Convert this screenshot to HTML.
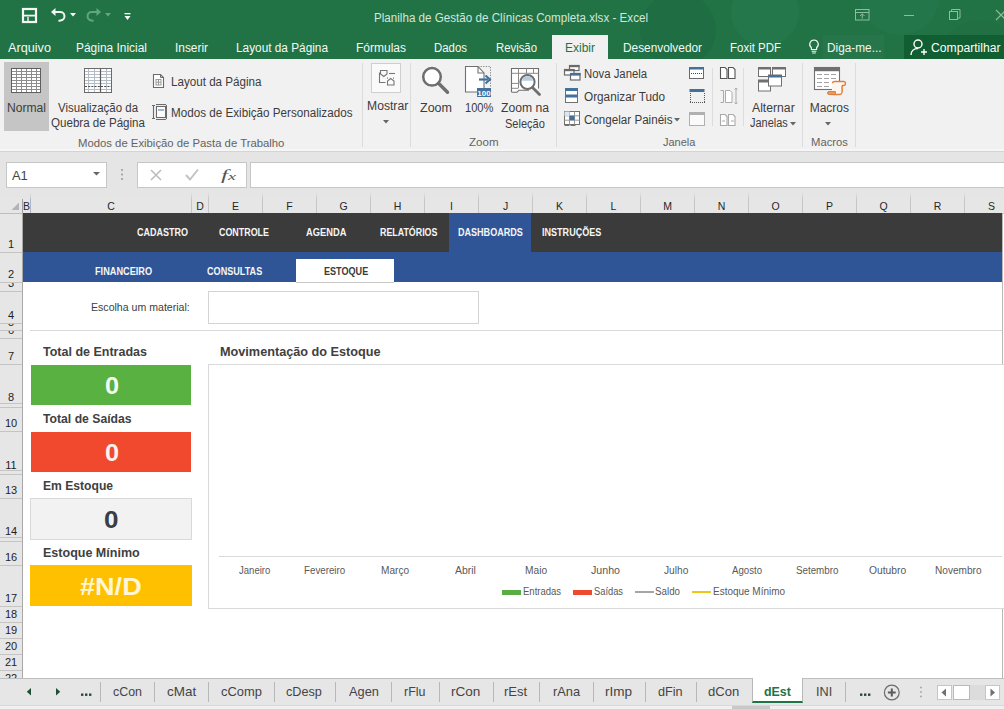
<!DOCTYPE html>
<html><head><meta charset="utf-8">
<style>
*{margin:0;padding:0;box-sizing:border-box}
html,body{width:1004px;height:709px;overflow:hidden;background:#fff;font-family:"Liberation Sans",sans-serif}
.a{position:absolute;white-space:nowrap}
.t{position:absolute;white-space:nowrap;transform-origin:0 0}
svg.a{overflow:visible}
</style></head><body>

<div class="a" style="left:0px;top:0px;width:1004px;height:59px;background:#217346"></div>
<svg class="a" style="left:560px;top:0px;overflow:hidden" width="444" height="59" viewBox="0 0 444 59"><circle cx="118" cy="30" r="38" fill="#1f6c42" opacity="0.8"/><circle cx="205" cy="12" r="34" fill="#26794c" opacity="0.6"/><circle cx="340" cy="-5" r="40" fill="#267a4c" opacity="0.5"/><circle cx="420" cy="60" r="40" fill="#1f6e43" opacity="0.6"/></svg>
<svg class="a" style="left:21px;top:7px;" width="17" height="17" viewBox="0 0 17 17"><rect x="2" y="2" width="13" height="13" fill="none" stroke="#f2f8f4" stroke-width="2.2"/><path d="M2 8.6h13" stroke="#f2f8f4" stroke-width="1.8"/><path d="M7 10v4.5" stroke="#f2f8f4" stroke-width="1.4"/></svg>
<svg class="a" style="left:50px;top:7px;" width="17" height="15" viewBox="0 0 17 15"><path d="M4 5h6a4.2 4.2 0 0 1 0.5 8.4L8.5 14" fill="none" stroke="#eef7f1" stroke-width="2"/><path d="M1 5L5.5 1V9z" fill="#eef7f1"/></svg>
<svg class="a" style="left:70px;top:13px;" width="7" height="4" viewBox="0 0 7 4"><path d="M0 0h6l-3 3.5z" fill="#fff"/></svg>
<svg class="a" style="left:85px;top:7px;" width="17" height="15" viewBox="0 0 17 15"><path d="M13 5H7a4.2 4.2 0 0 0-0.5 8.4L8.5 14" fill="none" stroke="#62a67e" stroke-width="2"/><path d="M16 5L11.5 1V9z" fill="#62a67e"/></svg>
<svg class="a" style="left:105px;top:13px;" width="7" height="4" viewBox="0 0 7 4"><path d="M0 0h6l-3 3.5z" fill="#6aa583"/></svg>
<svg class="a" style="left:124px;top:12px;" width="8" height="9" viewBox="0 0 8 9"><rect x="0.5" y="1" width="6" height="1.3" fill="#fff"/><path d="M0.5 4h6l-3 4z" fill="#fff"/></svg>
<div id="t0" class="t" style="left:374px;top:12.24px;font-size:12px;line-height:12px;color:#d3e6da;font-weight:400;font-family:'Liberation Sans', sans-serif;transform:scaleX(0.9689);">Planilha de Gestão de Clínicas Completa.xlsx - Excel</div>
<svg class="a" style="left:855px;top:9px;" width="15" height="12" viewBox="0 0 15 12"><rect x="0.5" y="0.5" width="13.5" height="10.5" fill="none" stroke="#8fbba0" stroke-width="1"/><path d="M0.5 3.5h13.5M7.25 9.5V5M5 7l2.25-2.25L9.5 7" fill="none" stroke="#8fbba0" stroke-width="1"/></svg>
<div class="a" style="left:904px;top:15px;width:10px;height:1px;background:#8fbba0"></div>
<svg class="a" style="left:949px;top:9px;" width="12" height="12" viewBox="0 0 12 12"><rect x="0.5" y="2.5" width="8" height="8" fill="none" stroke="#8fbba0"/><path d="M2.5 2.5V0.5h8.5v8.5H8.5" fill="none" stroke="#8fbba0"/></svg>
<svg class="a" style="left:995px;top:9px;" width="12" height="12" viewBox="0 0 12 12"><path d="M1 1l10 10M11 1L1 11" stroke="#8fbba0" stroke-width="1.1"/></svg>
<div id="t1" class="t" style="left:8px;top:41.64px;font-size:12px;line-height:12px;color:#f4f9f6;font-weight:400;font-family:'Liberation Sans', sans-serif;transform:scaleX(1.0568);">Arquivo</div>
<div id="t2" class="t" style="left:76px;top:41.64px;font-size:12px;line-height:12px;color:#f4f9f6;font-weight:400;font-family:'Liberation Sans', sans-serif;transform:scaleX(0.9945);">Página Inicial</div>
<div id="t3" class="t" style="left:175px;top:41.64px;font-size:12px;line-height:12px;color:#f4f9f6;font-weight:400;font-family:'Liberation Sans', sans-serif;transform:scaleX(0.9897);">Inserir</div>
<div id="t4" class="t" style="left:236px;top:41.64px;font-size:12px;line-height:12px;color:#f4f9f6;font-weight:400;font-family:'Liberation Sans', sans-serif;transform:scaleX(0.9848);">Layout da Página</div>
<div id="t5" class="t" style="left:356px;top:41.64px;font-size:12px;line-height:12px;color:#f4f9f6;font-weight:400;font-family:'Liberation Sans', sans-serif;">Fórmulas</div>
<div id="t6" class="t" style="left:434px;top:41.64px;font-size:12px;line-height:12px;color:#f4f9f6;font-weight:400;font-family:'Liberation Sans', sans-serif;transform:scaleX(0.9514);">Dados</div>
<div id="t7" class="t" style="left:496px;top:41.64px;font-size:12px;line-height:12px;color:#f4f9f6;font-weight:400;font-family:'Liberation Sans', sans-serif;transform:scaleX(0.9456);">Revisão</div>
<div id="t8" class="t" style="left:623px;top:41.64px;font-size:12px;line-height:12px;color:#f4f9f6;font-weight:400;font-family:'Liberation Sans', sans-serif;transform:scaleX(0.9869);">Desenvolvedor</div>
<div id="t9" class="t" style="left:730px;top:41.64px;font-size:12px;line-height:12px;color:#f4f9f6;font-weight:400;font-family:'Liberation Sans', sans-serif;transform:scaleX(0.9561);">Foxit PDF</div>
<div class="a" style="left:552px;top:35px;width:56px;height:24px;background:#f1f1f1"></div>
<div id="t10" class="t" style="left:565px;top:41.64px;font-size:12px;line-height:12px;color:#217346;font-weight:400;font-family:'Liberation Sans', sans-serif;">Exibir</div>
<div class="a" style="left:823px;top:35px;width:61px;height:24px;background:#27754a"></div>
<svg class="a" style="left:808px;top:39px;" width="12" height="15" viewBox="0 0 12 15"><path d="M6 1a4.3 4.3 0 0 0-2.6 7.7V10.5h5.2V8.7A4.3 4.3 0 0 0 6 1z" fill="none" stroke="#f0f7f2" stroke-width="1.2"/><path d="M3.6 12.2h4.8M4.2 14h3.6" stroke="#f0f7f2" stroke-width="1.1"/></svg>
<div id="t11" class="t" style="left:826.5px;top:41.64px;font-size:12px;line-height:12px;color:#f0f7f2;font-weight:400;font-family:'Liberation Sans', sans-serif;transform:scaleX(0.9845);">Diga-me...</div>
<div class="a" style="left:904px;top:35px;width:100px;height:24px;background:#105e31"></div>
<svg class="a" style="left:910px;top:39px;" width="18" height="17" viewBox="0 0 18 17"><circle cx="8" cy="5" r="4" fill="none" stroke="#fff" stroke-width="1.4"/><path d="M1 16c0-4 3-6.5 7-6.5" fill="none" stroke="#fff" stroke-width="1.4"/><path d="M11 13h6M14 10v6" stroke="#fff" stroke-width="1.4"/></svg>
<div id="t12" class="t" style="left:930.5px;top:41.64px;font-size:12px;line-height:12px;color:#ffffff;font-weight:400;font-family:'Liberation Sans', sans-serif;transform:scaleX(1.0116);">Compartilhar</div>
<div class="a" style="left:0px;top:59px;width:1004px;height:93px;background:#f1f1f1;border-bottom:1px solid #d4d4d4"></div>
<div class="a" style="left:0px;top:149px;width:1004px;height:2px;background:#f6f6f6"></div>
<div class="a" style="left:4px;top:62px;width:45px;height:69px;background:#c5c5c5"></div>
<svg class="a" style="left:11px;top:68px;" width="30" height="25" viewBox="0 0 30 25"><rect x="0" y="0" width="30" height="25" fill="#8c8c8c"/><rect x="1" y="1" width="4" height="2" fill="#fff"/><rect x="6" y="1" width="4" height="2" fill="#fff"/><rect x="11" y="1" width="4" height="2" fill="#fff"/><rect x="16" y="1" width="4" height="2" fill="#fff"/><rect x="21" y="1" width="4" height="2" fill="#fff"/><rect x="26" y="1" width="3" height="2" fill="#fff"/><rect x="1" y="4" width="4" height="2" fill="#fff"/><rect x="6" y="4" width="4" height="2" fill="#fff"/><rect x="11" y="4" width="4" height="2" fill="#fff"/><rect x="16" y="4" width="4" height="2" fill="#fff"/><rect x="21" y="4" width="4" height="2" fill="#fff"/><rect x="26" y="4" width="3" height="2" fill="#fff"/><rect x="1" y="7" width="4" height="2" fill="#fff"/><rect x="6" y="7" width="4" height="2" fill="#fff"/><rect x="11" y="7" width="4" height="2" fill="#fff"/><rect x="16" y="7" width="4" height="2" fill="#fff"/><rect x="21" y="7" width="4" height="2" fill="#fff"/><rect x="26" y="7" width="3" height="2" fill="#fff"/><rect x="1" y="10" width="4" height="2" fill="#fff"/><rect x="6" y="10" width="4" height="2" fill="#fff"/><rect x="11" y="10" width="4" height="2" fill="#fff"/><rect x="16" y="10" width="4" height="2" fill="#fff"/><rect x="21" y="10" width="4" height="2" fill="#fff"/><rect x="26" y="10" width="3" height="2" fill="#fff"/><rect x="1" y="13" width="4" height="2" fill="#fff"/><rect x="6" y="13" width="4" height="2" fill="#fff"/><rect x="11" y="13" width="4" height="2" fill="#fff"/><rect x="16" y="13" width="4" height="2" fill="#fff"/><rect x="21" y="13" width="4" height="2" fill="#fff"/><rect x="26" y="13" width="3" height="2" fill="#fff"/><rect x="1" y="16" width="4" height="2" fill="#fff"/><rect x="6" y="16" width="4" height="2" fill="#fff"/><rect x="11" y="16" width="4" height="2" fill="#fff"/><rect x="16" y="16" width="4" height="2" fill="#fff"/><rect x="21" y="16" width="4" height="2" fill="#fff"/><rect x="26" y="16" width="3" height="2" fill="#fff"/><rect x="1" y="19" width="4" height="2" fill="#fff"/><rect x="6" y="19" width="4" height="2" fill="#fff"/><rect x="11" y="19" width="4" height="2" fill="#fff"/><rect x="16" y="19" width="4" height="2" fill="#fff"/><rect x="21" y="19" width="4" height="2" fill="#fff"/><rect x="26" y="19" width="3" height="2" fill="#fff"/><rect x="1" y="22" width="4" height="2" fill="#fff"/><rect x="6" y="22" width="4" height="2" fill="#fff"/><rect x="11" y="22" width="4" height="2" fill="#fff"/><rect x="16" y="22" width="4" height="2" fill="#fff"/><rect x="21" y="22" width="4" height="2" fill="#fff"/><rect x="26" y="22" width="3" height="2" fill="#fff"/><rect x="0.5" y="0.5" width="29" height="24" fill="none" stroke="#5e5e5e"/></svg>
<svg class="a" style="left:84px;top:68px;" width="28" height="25" viewBox="0 0 28 25"><rect x="0" y="0" width="28" height="25" fill="#fbfdff"/><path d="M4.5 1v23M10.5 1v23M22.5 1v23M1 3.5h26M1 6.5h26M1 9.5h26M1 12.5h26M1 15.5h26M1 21.5h26" stroke="#b4bcc6" stroke-width="1"/><path d="M16.5 1v23" stroke="#5a5a5a" stroke-width="1.2"/><path d="M1 18.5h26" stroke="#4a4a4a" stroke-width="1.2" stroke-dasharray="2 1.2"/><rect x="0.5" y="0.5" width="27" height="24" fill="none" stroke="#6a6a6a"/></svg>
<div id="t13" class="t" style="left:7px;top:101.84px;font-size:12px;line-height:12px;color:#3c3c3c;font-weight:400;font-family:'Liberation Sans', sans-serif;transform:scaleX(1.0085);">Normal</div>
<div id="t14" class="t" style="left:58px;top:101.84px;font-size:12px;line-height:12px;color:#3c3c3c;font-weight:400;font-family:'Liberation Sans', sans-serif;transform:scaleX(0.9542);">Visualização da</div>
<div id="t15" class="t" style="left:51px;top:117.34px;font-size:12px;line-height:12px;color:#3c3c3c;font-weight:400;font-family:'Liberation Sans', sans-serif;transform:scaleX(0.9650);">Quebra de Página</div>
<svg class="a" style="left:152px;top:73px;" width="13" height="16" viewBox="0 0 13 16"><path d="M1.5 1.5h7l3 3v10h-10z" fill="#fff" stroke="#6b6b6b" stroke-width="1.1"/><path d="M8.5 1.5v3h3" fill="none" stroke="#6b6b6b"/><rect x="4" y="6.5" width="5" height="5.5" fill="none" stroke="#9a9a9a"/><path d="M6.5 6.5v5.5M4 9.2h5" stroke="#9a9a9a"/></svg>
<div id="t16" class="t" style="left:170.5px;top:75.84px;font-size:12px;line-height:12px;color:#3c3c3c;font-weight:400;font-family:'Liberation Sans', sans-serif;transform:scaleX(0.9687);">Layout da Página</div>
<svg class="a" style="left:150px;top:103px;" width="18" height="18" viewBox="0 0 18 18"><path d="M2 2.5h3M2 15.5h3M3.5 2.5v13" stroke="#6b6b6b" stroke-width="1.1"/><rect x="6.5" y="3.5" width="9" height="11" fill="#fff" stroke="#6b6b6b" stroke-width="1.1"/><path d="M6 1.5h10M6 16.5h10M16.5 2v14" stroke="#6b6b6b" stroke-width="1"/><rect x="8" y="6" width="6" height="2" fill="#9fb7cf"/></svg>
<div id="t17" class="t" style="left:170.5px;top:106.84px;font-size:12px;line-height:12px;color:#3c3c3c;font-weight:400;font-family:'Liberation Sans', sans-serif;transform:scaleX(0.9717);">Modos de Exibição Personalizados</div>
<div id="t18" class="t" style="left:77.6px;top:137.69px;font-size:11px;line-height:11px;color:#636363;font-weight:400;font-family:'Liberation Sans', sans-serif;transform:scaleX(1.0290);">Modos de Exibição de Pasta de Trabalho</div>
<div class="a" style="left:362px;top:63px;width:1px;height:84px;background:#dcdcdc"></div>
<div class="a" style="left:371px;top:63px;width:30px;height:30px;background:#fafafa;border:1px solid #cfcfcf"></div>
<svg class="a" style="left:378px;top:69px;" width="20" height="18" viewBox="0 0 20 18"><path d="M1.5 3.5v10h6" fill="none" stroke="#777" stroke-width="1.1"/><path d="M2.5 1.5h6.5v3.5l-3.2 2.5-3.3-2.5z" fill="none" stroke="#777" stroke-width="1.1"/><path d="M11 4.5h6" stroke="#777" stroke-width="1.1"/><path d="M9.5 8.5v1.2M15.5 8.5v1.2" stroke="#777"/><path d="M9.5 16v-4l3.2-2.5 3.3 2.5v4z" fill="none" stroke="#777" stroke-width="1.1"/></svg>
<div id="t19" class="t" style="left:366.6px;top:100.04px;font-size:12px;line-height:12px;color:#3c3c3c;font-weight:400;font-family:'Liberation Sans', sans-serif;transform:scaleX(1.0130);">Mostrar</div>
<svg class="a" style="left:383px;top:120px;" width="7" height="4" viewBox="0 0 7 4"><path d="M0 0h6l-3 3.5z" fill="#666"/></svg>
<div class="a" style="left:410px;top:63px;width:1px;height:84px;background:#dcdcdc"></div>
<svg class="a" style="left:420px;top:65px;" width="31" height="31" viewBox="0 0 31 31"><circle cx="12" cy="11.8" r="8.8" fill="#fff" stroke="#6e6e6e" stroke-width="2.5"/><path d="M18.5 18.3l9 9" stroke="#6e6e6e" stroke-width="3.4" stroke-linecap="round"/></svg>
<div id="t20" class="t" style="left:420px;top:101.64px;font-size:12px;line-height:12px;color:#3c3c3c;font-weight:400;font-family:'Liberation Sans', sans-serif;transform:scaleX(1.0428);">Zoom</div>
<svg class="a" style="left:464px;top:65px;" width="29" height="33" viewBox="0 0 29 33"><path d="M1.5 1.5h12.5l6 6.5v19h-18.5z" fill="#fff" stroke="#707070" stroke-width="1.1"/><path d="M14 1.5V8h6" fill="none" stroke="#707070" stroke-width="1.1"/><path d="M14 1.5h12.5v20" fill="none" stroke="#888" stroke-dasharray="1.3 1.3"/><path d="M15 14.5h9" stroke="#3f6fa0" stroke-width="2.2"/><path d="M21.5 10.5l4.5 4-4.5 4" fill="none" stroke="#3f6fa0" stroke-width="2"/><rect x="13" y="23" width="14" height="9" fill="#41719c"/><text x="20" y="30.6" font-size="8" font-family="Liberation Sans" font-weight="bold" fill="#fff" text-anchor="middle">100</text></svg>
<div id="t21" class="t" style="left:464.6px;top:101.64px;font-size:12px;line-height:12px;color:#3c3c3c;font-weight:400;font-family:'Liberation Sans', sans-serif;transform:scaleX(0.9250);">100%</div>
<svg class="a" style="left:510px;top:67px;" width="33" height="31" viewBox="0 0 33 31"><path d="M1.5 25V1.5h27v20" fill="#fff" stroke="#6e6e6e" stroke-width="1.1"/><path d="M1.5 25.2h5.5l2-2h10" fill="none" stroke="#6e6e6e" stroke-width="1.1"/><path d="M1.5 6.3h27M8.5 1.5v4.8M16.5 1.5v4.8M23.5 1.5v4.8M1.5 16.4h6.5M1.5 21.3h6.5M8.5 6.3v15" stroke="#8a8a8a" stroke-width="1"/><circle cx="17.5" cy="15" r="7.1" fill="#fff" stroke="#6e6e6e" stroke-width="2"/><path d="M12 13.8a5.6 5.6 0 0 1 11 0z" fill="#b6cde0"/><path d="M22.5 20.5l7 7" stroke="#6e6e6e" stroke-width="2.8" stroke-linecap="round"/></svg>
<div id="t22" class="t" style="left:501px;top:101.64px;font-size:12px;line-height:12px;color:#3c3c3c;font-weight:400;font-family:'Liberation Sans', sans-serif;transform:scaleX(1.0135);">Zoom na</div>
<div id="t23" class="t" style="left:505.4px;top:117.54px;font-size:12px;line-height:12px;color:#3c3c3c;font-weight:400;font-family:'Liberation Sans', sans-serif;transform:scaleX(0.9199);">Seleção</div>
<div id="t24" class="t" style="left:469px;top:137.29px;font-size:11px;line-height:11px;color:#636363;font-weight:400;font-family:'Liberation Sans', sans-serif;transform:scaleX(1.0489);">Zoom</div>
<div class="a" style="left:556px;top:63px;width:1px;height:84px;background:#dcdcdc"></div>
<svg class="a" style="left:563px;top:64px;" width="18" height="17" viewBox="0 0 18 17"><rect x="6.5" y="1.5" width="9.5" height="5" fill="#fff" stroke="#6a6a6a" stroke-width="1.2"/><rect x="6" y="1" width="10.5" height="2.2" fill="#6a6a6a"/><rect x="1.5" y="5.5" width="9.5" height="5.5" fill="#fff" stroke="#6a6a6a" stroke-width="1.2"/><rect x="1" y="5" width="10.5" height="2.2" fill="#6a6a6a"/><rect x="7.5" y="9.5" width="9.5" height="6.5" fill="#fff" stroke="#6a6a6a" stroke-width="1.2"/><rect x="7" y="9" width="10.5" height="2.6" fill="#41719c"/></svg>
<div id="t25" class="t" style="left:583.5px;top:67.84px;font-size:12px;line-height:12px;color:#3c3c3c;font-weight:400;font-family:'Liberation Sans', sans-serif;transform:scaleX(0.9458);">Nova Janela</div>
<svg class="a" style="left:564px;top:87px;" width="15" height="17" viewBox="0 0 15 17"><rect x="1.5" y="1.5" width="12" height="14" fill="#fff" stroke="#707070"/><rect x="1.5" y="1" width="12" height="3" fill="#41719c"/><rect x="1.5" y="7.5" width="12" height="3" fill="#41719c"/></svg>
<div id="t26" class="t" style="left:583.5px;top:90.64px;font-size:12px;line-height:12px;color:#3c3c3c;font-weight:400;font-family:'Liberation Sans', sans-serif;transform:scaleX(0.9804);">Organizar Tudo</div>
<svg class="a" style="left:563px;top:110px;" width="18" height="17" viewBox="0 0 18 17"><rect x="1.5" y="1.5" width="15" height="13" fill="#fff" stroke="#707070"/><path d="M1.5 5.8h15M1.5 10.2h15M6.5 1.5v13M11.5 1.5v13" stroke="#9a9a9a"/><rect x="6.5" y="5.8" width="5" height="4.4" fill="#41719c"/><rect x="1.5" y="1.5" width="5" height="4.3" fill="#dce6f0"/><path d="M1.5 15.5h5M7.5 15.5h5" stroke="#707070"/></svg>
<div id="t27" class="t" style="left:583.5px;top:113.54px;font-size:12px;line-height:12px;color:#3c3c3c;font-weight:400;font-family:'Liberation Sans', sans-serif;transform:scaleX(0.9684);">Congelar Painéis</div>
<svg class="a" style="left:674px;top:118px;" width="7" height="4" viewBox="0 0 7 4"><path d="M0 0h6l-3 3.5z" fill="#666"/></svg>
<svg class="a" style="left:688px;top:66px;" width="17" height="14" viewBox="0 0 17 14"><rect x="1.5" y="1.5" width="14" height="11" fill="#fff" stroke="#6a6a6a"/><rect x="1" y="1" width="15" height="2.5" fill="#41719c"/><rect x="3" y="7" width="1" height="1" fill="#444"/><rect x="5" y="7" width="1" height="1" fill="#444"/><rect x="7" y="7" width="1" height="1" fill="#444"/><rect x="9" y="7" width="1" height="1" fill="#444"/><rect x="11" y="7" width="1" height="1" fill="#444"/><rect x="13" y="7" width="1" height="1" fill="#444"/></svg>
<svg class="a" style="left:688px;top:88px;" width="18" height="16" viewBox="0 0 18 16"><rect x="1.5" y="1" width="15" height="3" fill="#41719c"/><rect x="2" y="14" width="1" height="1" fill="#555"/><rect x="4" y="14" width="1" height="1" fill="#555"/><rect x="6" y="14" width="1" height="1" fill="#555"/><rect x="8" y="14" width="1" height="1" fill="#555"/><rect x="10" y="14" width="1" height="1" fill="#555"/><rect x="12" y="14" width="1" height="1" fill="#555"/><rect x="14" y="14" width="1" height="1" fill="#555"/><rect x="16" y="14" width="1" height="1" fill="#555"/><rect x="2" y="5" width="1" height="1" fill="#555"/><rect x="16" y="5" width="1" height="1" fill="#555"/><rect x="2" y="7" width="1" height="1" fill="#555"/><rect x="16" y="7" width="1" height="1" fill="#555"/><rect x="2" y="9" width="1" height="1" fill="#555"/><rect x="16" y="9" width="1" height="1" fill="#555"/><rect x="2" y="11" width="1" height="1" fill="#555"/><rect x="16" y="11" width="1" height="1" fill="#555"/><rect x="2" y="13" width="1" height="1" fill="#555"/><rect x="16" y="13" width="1" height="1" fill="#555"/></svg>
<svg class="a" style="left:688px;top:111px;" width="17" height="15" viewBox="0 0 17 15"><rect x="1.5" y="1.5" width="15" height="13" fill="#fafafa" stroke="#b0b0b0"/><rect x="1.5" y="1.5" width="15" height="2.5" fill="#b0b0b0"/></svg>
<div class="a" style="left:712px;top:68px;width:1px;height:58px;background:#dcdcdc"></div>
<svg class="a" style="left:719px;top:66px;" width="18" height="14" viewBox="0 0 18 14"><path d="M1.5 1.5h4.5l2 2v9h-6.5z" fill="#fff" stroke="#555" stroke-width="1.1"/><path d="M9.5 1.5h4.5l2 2v9h-6.5z" fill="#fff" stroke="#555" stroke-width="1.1"/></svg>
<svg class="a" style="left:719px;top:87px;" width="19" height="18" viewBox="0 0 19 18"><path d="M1.5 3.5h3v12h-3" fill="none" stroke="#aaa"/><path d="M6.5 3.5h4.5l2 2v10h-6.5z" fill="#fff" stroke="#aaa"/><path d="M17 1v16M15.5 2.5l1.5-1.5 1.5 1.5M15.5 15.5l1.5 1.5 1.5-1.5" fill="none" stroke="#aaa"/></svg>
<svg class="a" style="left:719px;top:113px;" width="18" height="13" viewBox="0 0 18 13"><path d="M1.5 1.5h4.5l2 2v9h-6.5z" fill="#fff" stroke="#aaa" stroke-width="1.1"/><path d="M9.5 1.5h4.5l2 2v9h-6.5z" fill="#fff" stroke="#aaa" stroke-width="1.1"/><path d="M3 8h3M12 8h3" stroke="#aaa"/></svg>
<div class="a" style="left:743px;top:68px;width:1px;height:58px;background:#dcdcdc"></div>
<svg class="a" style="left:757px;top:66px;" width="31" height="27" viewBox="0 0 31 27"><rect x="1.5" y="1.5" width="12" height="9" fill="#fff" stroke="#707070"/><rect x="1.5" y="1" width="12" height="2.5" fill="#707070"/><rect x="15.5" y="1.5" width="13" height="9" fill="#fff" stroke="#707070"/><rect x="15.5" y="1" width="13" height="2.5" fill="#707070"/><rect x="1.5" y="14" width="12" height="11" fill="#fff" stroke="#707070"/><rect x="1.5" y="14" width="12" height="2.5" fill="#707070"/><rect x="11.5" y="9" width="13" height="11" fill="#fff" stroke="#707070"/><rect x="11.5" y="9" width="13" height="2.5" fill="#41719c"/></svg>
<div id="t28" class="t" style="left:752.3px;top:101.54px;font-size:12px;line-height:12px;color:#3c3c3c;font-weight:400;font-family:'Liberation Sans', sans-serif;transform:scaleX(1.0159);">Alternar</div>
<div id="t29" class="t" style="left:750px;top:117.34px;font-size:12px;line-height:12px;color:#3c3c3c;font-weight:400;font-family:'Liberation Sans', sans-serif;transform:scaleX(0.9112);">Janelas</div>
<svg class="a" style="left:790px;top:122px;" width="7" height="4" viewBox="0 0 7 4"><path d="M0 0h6l-3 3.5z" fill="#666"/></svg>
<div id="t30" class="t" style="left:663px;top:137.29px;font-size:11px;line-height:11px;color:#636363;font-weight:400;font-family:'Liberation Sans', sans-serif;">Janela</div>
<div class="a" style="left:802px;top:63px;width:1px;height:84px;background:#dcdcdc"></div>
<svg class="a" style="left:813px;top:66px;" width="34" height="30" viewBox="0 0 34 30"><rect x="1.5" y="1.5" width="25" height="22" fill="#fff" stroke="#707070" stroke-width="1.1"/><rect x="1" y="1" width="26" height="4.2" fill="#707070"/><path d="M4 8.5h5M11 8.5h5M18 8.5h5M4 12.5h5M11 12.5h5M18 12.5h5M4 16.5h5M11 16.5h5M4 20.5h5M11 20.5h5" stroke="#a3a3a3" stroke-width="1"/><path d="M19.5 17.5a2 2 0 0 1 2-2h9a2 2 0 0 1 0 4h-1.5v6.5a2.5 2.5 0 0 1-2.5 2.5h-8" fill="#fdf6ef" stroke="#e0803c" stroke-width="1.3"/><rect x="19.5" y="17" width="9.5" height="9" fill="#fdf6ef"/><path d="M29 19.5v6.5" stroke="#e0803c" stroke-width="1.3"/><path d="M16 25.5h6.5v3h-6.5a1.5 1.5 0 0 1 0-3z" fill="#e49a62" stroke="#e0803c" stroke-width="1"/></svg>
<div id="t31" class="t" style="left:809.7px;top:101.54px;font-size:12px;line-height:12px;color:#3c3c3c;font-weight:400;font-family:'Liberation Sans', sans-serif;">Macros</div>
<svg class="a" style="left:825px;top:122px;" width="7" height="4" viewBox="0 0 7 4"><path d="M0 0h6l-3 3.5z" fill="#666"/></svg>
<div id="t32" class="t" style="left:810.8px;top:137.29px;font-size:11px;line-height:11px;color:#636363;font-weight:400;font-family:'Liberation Sans', sans-serif;transform:scaleX(1.0232);">Macros</div>
<div class="a" style="left:855px;top:63px;width:1px;height:84px;background:#dcdcdc"></div>
<div class="a" style="left:0px;top:152px;width:1004px;height:46px;background:#e5e5e5"></div>
<div class="a" style="left:6px;top:162px;width:101px;height:26px;background:#fff;border:1px solid #c6c6c6"></div>
<div id="t33" class="t" style="left:12.4px;top:169.00px;font-size:13px;line-height:13px;color:#444;font-weight:400;font-family:'Liberation Sans', sans-serif;transform:scaleX(0.9933);">A1</div>
<svg class="a" style="left:93px;top:172px;" width="8" height="5" viewBox="0 0 8 5"><path d="M0 0h7l-3.5 3.5z" fill="#666"/></svg>
<svg class="a" style="left:120px;top:168px;" width="4" height="14" viewBox="0 0 4 14"><circle cx="2" cy="2" r="1" fill="#999"/><circle cx="2" cy="6.5" r="1" fill="#999"/><circle cx="2" cy="11" r="1" fill="#999"/></svg>
<div class="a" style="left:137px;top:162px;width:110px;height:26px;background:#fff;border:1px solid #c6c6c6"></div>
<svg class="a" style="left:150px;top:169px;" width="12" height="12" viewBox="0 0 12 12"><path d="M1 1l10 10M11 1L1 11" stroke="#bdbdbd" stroke-width="1.6"/></svg>
<svg class="a" style="left:185px;top:168px;" width="14" height="13" viewBox="0 0 14 13"><path d="M1 7l4 4.5L13 1.5" fill="none" stroke="#c3c3c3" stroke-width="2"/></svg>
<div id="t34" class="t" style="left:221px;top:169.15px;font-size:14px;line-height:14px;color:#555;font-weight:400;font-family:'Liberation Serif', serif;transform:scaleX(1.7978);"><i>f</i><span style="font-size:10px"><i>x</i></span></div>
<div class="a" style="left:250px;top:162px;width:760px;height:26px;background:#fff;border:1px solid #c6c6c6"></div>
<div class="a" style="left:0px;top:198px;width:1004px;height:15px;background:#e6e6e6"></div>
<div class="a" style="left:0px;top:213px;width:1004px;height:1px;background:#bdbdbd"></div>
<svg class="a" style="left:10px;top:201px;" width="10" height="10" viewBox="0 0 10 10"><path d="M9 1.5V9H1.5z" fill="#b4b4b4"/></svg>
<div class="a" style="left:23px;top:200.81px;width:7px;font-size:10.5px;line-height:10.5px;text-align:center;color:#262626;font-family:'Liberation Sans',sans-serif">B</div>
<div class="a" style="left:31px;top:200.81px;width:160px;font-size:10.5px;line-height:10.5px;text-align:center;color:#262626;font-family:'Liberation Sans',sans-serif">C</div>
<div class="a" style="left:30px;top:192px;width:1px;height:21px;background:linear-gradient(#e5e5e5,#c6c6c6 35%,#c6c6c6)"></div>
<div class="a" style="left:192px;top:200.81px;width:16px;font-size:10.5px;line-height:10.5px;text-align:center;color:#262626;font-family:'Liberation Sans',sans-serif">D</div>
<div class="a" style="left:191px;top:192px;width:1px;height:21px;background:linear-gradient(#e5e5e5,#c6c6c6 35%,#c6c6c6)"></div>
<div class="a" style="left:209px;top:200.81px;width:53px;font-size:10.5px;line-height:10.5px;text-align:center;color:#262626;font-family:'Liberation Sans',sans-serif">E</div>
<div class="a" style="left:208px;top:192px;width:1px;height:21px;background:linear-gradient(#e5e5e5,#c6c6c6 35%,#c6c6c6)"></div>
<div class="a" style="left:263px;top:200.81px;width:53px;font-size:10.5px;line-height:10.5px;text-align:center;color:#262626;font-family:'Liberation Sans',sans-serif">F</div>
<div class="a" style="left:262px;top:192px;width:1px;height:21px;background:linear-gradient(#e5e5e5,#c6c6c6 35%,#c6c6c6)"></div>
<div class="a" style="left:317px;top:200.81px;width:53px;font-size:10.5px;line-height:10.5px;text-align:center;color:#262626;font-family:'Liberation Sans',sans-serif">G</div>
<div class="a" style="left:316px;top:192px;width:1px;height:21px;background:linear-gradient(#e5e5e5,#c6c6c6 35%,#c6c6c6)"></div>
<div class="a" style="left:371px;top:200.81px;width:53px;font-size:10.5px;line-height:10.5px;text-align:center;color:#262626;font-family:'Liberation Sans',sans-serif">H</div>
<div class="a" style="left:370px;top:192px;width:1px;height:21px;background:linear-gradient(#e5e5e5,#c6c6c6 35%,#c6c6c6)"></div>
<div class="a" style="left:425px;top:200.81px;width:53px;font-size:10.5px;line-height:10.5px;text-align:center;color:#262626;font-family:'Liberation Sans',sans-serif">I</div>
<div class="a" style="left:424px;top:192px;width:1px;height:21px;background:linear-gradient(#e5e5e5,#c6c6c6 35%,#c6c6c6)"></div>
<div class="a" style="left:479px;top:200.81px;width:53px;font-size:10.5px;line-height:10.5px;text-align:center;color:#262626;font-family:'Liberation Sans',sans-serif">J</div>
<div class="a" style="left:478px;top:192px;width:1px;height:21px;background:linear-gradient(#e5e5e5,#c6c6c6 35%,#c6c6c6)"></div>
<div class="a" style="left:533px;top:200.81px;width:53px;font-size:10.5px;line-height:10.5px;text-align:center;color:#262626;font-family:'Liberation Sans',sans-serif">K</div>
<div class="a" style="left:532px;top:192px;width:1px;height:21px;background:linear-gradient(#e5e5e5,#c6c6c6 35%,#c6c6c6)"></div>
<div class="a" style="left:587px;top:200.81px;width:53px;font-size:10.5px;line-height:10.5px;text-align:center;color:#262626;font-family:'Liberation Sans',sans-serif">L</div>
<div class="a" style="left:586px;top:192px;width:1px;height:21px;background:linear-gradient(#e5e5e5,#c6c6c6 35%,#c6c6c6)"></div>
<div class="a" style="left:641px;top:200.81px;width:53px;font-size:10.5px;line-height:10.5px;text-align:center;color:#262626;font-family:'Liberation Sans',sans-serif">M</div>
<div class="a" style="left:640px;top:192px;width:1px;height:21px;background:linear-gradient(#e5e5e5,#c6c6c6 35%,#c6c6c6)"></div>
<div class="a" style="left:695px;top:200.81px;width:53px;font-size:10.5px;line-height:10.5px;text-align:center;color:#262626;font-family:'Liberation Sans',sans-serif">N</div>
<div class="a" style="left:694px;top:192px;width:1px;height:21px;background:linear-gradient(#e5e5e5,#c6c6c6 35%,#c6c6c6)"></div>
<div class="a" style="left:749px;top:200.81px;width:53px;font-size:10.5px;line-height:10.5px;text-align:center;color:#262626;font-family:'Liberation Sans',sans-serif">O</div>
<div class="a" style="left:748px;top:192px;width:1px;height:21px;background:linear-gradient(#e5e5e5,#c6c6c6 35%,#c6c6c6)"></div>
<div class="a" style="left:803px;top:200.81px;width:53px;font-size:10.5px;line-height:10.5px;text-align:center;color:#262626;font-family:'Liberation Sans',sans-serif">P</div>
<div class="a" style="left:802px;top:192px;width:1px;height:21px;background:linear-gradient(#e5e5e5,#c6c6c6 35%,#c6c6c6)"></div>
<div class="a" style="left:857px;top:200.81px;width:53px;font-size:10.5px;line-height:10.5px;text-align:center;color:#262626;font-family:'Liberation Sans',sans-serif">Q</div>
<div class="a" style="left:856px;top:192px;width:1px;height:21px;background:linear-gradient(#e5e5e5,#c6c6c6 35%,#c6c6c6)"></div>
<div class="a" style="left:911px;top:200.81px;width:53px;font-size:10.5px;line-height:10.5px;text-align:center;color:#262626;font-family:'Liberation Sans',sans-serif">R</div>
<div class="a" style="left:910px;top:192px;width:1px;height:21px;background:linear-gradient(#e5e5e5,#c6c6c6 35%,#c6c6c6)"></div>
<div class="a" style="left:965px;top:200.81px;width:53px;font-size:10.5px;line-height:10.5px;text-align:center;color:#262626;font-family:'Liberation Sans',sans-serif">S</div>
<div class="a" style="left:964px;top:192px;width:1px;height:21px;background:linear-gradient(#e5e5e5,#c6c6c6 35%,#c6c6c6)"></div>
<div class="a" style="left:22px;top:199px;width:1px;height:14px;background:#a0a0a0"></div>
<div class="a" style="left:30px;top:199px;width:1px;height:14px;background:#a8b8d0"></div>
<div class="a" style="left:0px;top:214px;width:22px;height:464px;background:#e6e6e6"></div>
<div class="a" style="left:22px;top:213px;width:1px;height:465px;background:#a8a8a8"></div>
<div class="a" style="left:0;top:213px;width:22px;height:39px;overflow:hidden"><div class="a" style="left:0;top:26.29px;width:22px;text-align:center;font-size:11px;line-height:11px;color:#1e1e1e;font-family:'Liberation Sans',sans-serif">1</div></div>
<div class="a" style="left:0px;top:252px;width:22px;height:1px;background:#c4c4c4"></div>
<div class="a" style="left:0;top:253px;width:22px;height:29px;overflow:hidden"><div class="a" style="left:0;top:16.29px;width:22px;text-align:center;font-size:11px;line-height:11px;color:#1e1e1e;font-family:'Liberation Sans',sans-serif">2</div></div>
<div class="a" style="left:0px;top:282px;width:22px;height:1px;background:#c4c4c4"></div>
<div class="a" style="left:0;top:283px;width:22px;height:8px;overflow:hidden"><div class="a" style="left:0;top:-4.71px;width:22px;text-align:center;font-size:11px;line-height:11px;color:#1e1e1e;font-family:'Liberation Sans',sans-serif">3</div></div>
<div class="a" style="left:0px;top:291px;width:22px;height:1px;background:#c4c4c4"></div>
<div class="a" style="left:0;top:292px;width:22px;height:31px;overflow:hidden"><div class="a" style="left:0;top:18.29px;width:22px;text-align:center;font-size:11px;line-height:11px;color:#1e1e1e;font-family:'Liberation Sans',sans-serif">4</div></div>
<div class="a" style="left:0px;top:323px;width:22px;height:1px;background:#c4c4c4"></div>
<div class="a" style="left:0;top:324px;width:22px;height:6px;overflow:hidden"><div class="a" style="left:0;top:-6.71px;width:22px;text-align:center;font-size:11px;line-height:11px;color:#1e1e1e;font-family:'Liberation Sans',sans-serif">5</div></div>
<div class="a" style="left:0px;top:330px;width:22px;height:1px;background:#c4c4c4"></div>
<div class="a" style="left:0;top:331px;width:22px;height:7px;overflow:hidden"><div class="a" style="left:0;top:-5.71px;width:22px;text-align:center;font-size:11px;line-height:11px;color:#1e1e1e;font-family:'Liberation Sans',sans-serif">6</div></div>
<div class="a" style="left:0px;top:338px;width:22px;height:1px;background:#c4c4c4"></div>
<div class="a" style="left:0;top:339px;width:22px;height:25px;overflow:hidden"><div class="a" style="left:0;top:12.29px;width:22px;text-align:center;font-size:11px;line-height:11px;color:#1e1e1e;font-family:'Liberation Sans',sans-serif">7</div></div>
<div class="a" style="left:0px;top:364px;width:22px;height:1px;background:#c4c4c4"></div>
<div class="a" style="left:0;top:365px;width:22px;height:38px;overflow:hidden"><div class="a" style="left:0;top:27.49px;width:22px;text-align:center;font-size:11px;line-height:11px;color:#1e1e1e;font-family:'Liberation Sans',sans-serif">8</div></div>
<div class="a" style="left:0px;top:403px;width:22px;height:1px;background:#c4c4c4"></div>
<div class="a" style="left:0;top:408px;width:22px;height:23px;overflow:hidden"><div class="a" style="left:0;top:10.29px;width:22px;text-align:center;font-size:11px;line-height:11px;color:#1e1e1e;font-family:'Liberation Sans',sans-serif">10</div></div>
<div class="a" style="left:0px;top:431px;width:22px;height:1px;background:#c4c4c4"></div>
<div class="a" style="left:0;top:432px;width:22px;height:38px;overflow:hidden"><div class="a" style="left:0;top:27.69px;width:22px;text-align:center;font-size:11px;line-height:11px;color:#1e1e1e;font-family:'Liberation Sans',sans-serif">11</div></div>
<div class="a" style="left:0px;top:470px;width:22px;height:1px;background:#c4c4c4"></div>
<div class="a" style="left:0;top:475px;width:22px;height:23px;overflow:hidden"><div class="a" style="left:0;top:10.29px;width:22px;text-align:center;font-size:11px;line-height:11px;color:#1e1e1e;font-family:'Liberation Sans',sans-serif">13</div></div>
<div class="a" style="left:0px;top:498px;width:22px;height:1px;background:#c4c4c4"></div>
<div class="a" style="left:0;top:499px;width:22px;height:38px;overflow:hidden"><div class="a" style="left:0;top:27.49px;width:22px;text-align:center;font-size:11px;line-height:11px;color:#1e1e1e;font-family:'Liberation Sans',sans-serif">14</div></div>
<div class="a" style="left:0px;top:537px;width:22px;height:1px;background:#c4c4c4"></div>
<div class="a" style="left:0;top:542px;width:22px;height:23px;overflow:hidden"><div class="a" style="left:0;top:10.09px;width:22px;text-align:center;font-size:11px;line-height:11px;color:#1e1e1e;font-family:'Liberation Sans',sans-serif">16</div></div>
<div class="a" style="left:0px;top:565px;width:22px;height:1px;background:#c4c4c4"></div>
<div class="a" style="left:0;top:566px;width:22px;height:40px;overflow:hidden"><div class="a" style="left:0;top:27.29px;width:22px;text-align:center;font-size:11px;line-height:11px;color:#1e1e1e;font-family:'Liberation Sans',sans-serif">17</div></div>
<div class="a" style="left:0px;top:606px;width:22px;height:1px;background:#c4c4c4"></div>
<div class="a" style="left:0;top:607px;width:22px;height:15px;overflow:hidden"><div class="a" style="left:0;top:2.39px;width:22px;text-align:center;font-size:11px;line-height:11px;color:#1e1e1e;font-family:'Liberation Sans',sans-serif">18</div></div>
<div class="a" style="left:0px;top:622px;width:22px;height:1px;background:#c4c4c4"></div>
<div class="a" style="left:0;top:623px;width:22px;height:15px;overflow:hidden"><div class="a" style="left:0;top:2.29px;width:22px;text-align:center;font-size:11px;line-height:11px;color:#1e1e1e;font-family:'Liberation Sans',sans-serif">19</div></div>
<div class="a" style="left:0px;top:638px;width:22px;height:1px;background:#c4c4c4"></div>
<div class="a" style="left:0;top:639px;width:22px;height:15px;overflow:hidden"><div class="a" style="left:0;top:2.29px;width:22px;text-align:center;font-size:11px;line-height:11px;color:#1e1e1e;font-family:'Liberation Sans',sans-serif">20</div></div>
<div class="a" style="left:0px;top:654px;width:22px;height:1px;background:#c4c4c4"></div>
<div class="a" style="left:0;top:655px;width:22px;height:15px;overflow:hidden"><div class="a" style="left:0;top:2.29px;width:22px;text-align:center;font-size:11px;line-height:11px;color:#1e1e1e;font-family:'Liberation Sans',sans-serif">21</div></div>
<div class="a" style="left:0px;top:670px;width:22px;height:1px;background:#c4c4c4"></div>
<div class="a" style="left:0;top:671px;width:22px;height:7px;overflow:hidden"><div class="a" style="left:0;top:2.29px;width:22px;text-align:center;font-size:11px;line-height:11px;color:#1e1e1e;font-family:'Liberation Sans',sans-serif">22</div></div>
<div class="a" style="left:0px;top:407px;width:22px;height:1px;background:#c4c4c4"></div>
<div class="a" style="left:0px;top:474px;width:22px;height:1px;background:#c4c4c4"></div>
<div class="a" style="left:0px;top:541px;width:22px;height:1px;background:#c4c4c4"></div>
<div class="a" style="left:24px;top:213px;width:978px;height:465px;background:#fff"></div>
<div class="a" style="left:1002px;top:213px;width:1px;height:465px;background:#b8b8b8"></div>
<div class="a" style="left:23px;top:213px;width:979px;height:39px;background:#3b3b3b"></div>
<div class="a" style="left:449px;top:213px;width:82px;height:39px;background:#2f5597"></div>
<div id="t35" class="t" style="left:136.7px;top:227.53px;font-size:10px;line-height:10px;color:#f6f6f6;font-weight:700;font-family:'Liberation Sans', sans-serif;transform:scaleX(0.9017);">CADASTRO</div>
<div id="t36" class="t" style="left:219.2px;top:227.53px;font-size:10px;line-height:10px;color:#f6f6f6;font-weight:700;font-family:'Liberation Sans', sans-serif;transform:scaleX(0.8911);">CONTROLE</div>
<div id="t37" class="t" style="left:305.9px;top:227.53px;font-size:10px;line-height:10px;color:#f6f6f6;font-weight:700;font-family:'Liberation Sans', sans-serif;transform:scaleX(0.9321);">AGENDA</div>
<div id="t38" class="t" style="left:379.5px;top:227.53px;font-size:10px;line-height:10px;color:#f6f6f6;font-weight:700;font-family:'Liberation Sans', sans-serif;transform:scaleX(0.8854);">RELATÓRIOS</div>
<div id="t39" class="t" style="left:457.5px;top:227.53px;font-size:10px;line-height:10px;color:#f6f6f6;font-weight:700;font-family:'Liberation Sans', sans-serif;transform:scaleX(0.9041);">DASHBOARDS</div>
<div id="t40" class="t" style="left:542.2px;top:227.53px;font-size:10px;line-height:10px;color:#f6f6f6;font-weight:700;font-family:'Liberation Sans', sans-serif;transform:scaleX(0.9045);">INSTRUÇÕES</div>
<div class="a" style="left:23px;top:252px;width:979px;height:30px;background:#2f5597"></div>
<div class="a" style="left:296px;top:259px;width:98px;height:23px;background:#fff"></div>
<div class="a" style="left:296px;top:282px;width:98px;height:1px;background:#c8c8c8"></div>
<div id="t41" class="t" style="left:94.8px;top:266.54px;font-size:10px;line-height:10px;color:#f6f6f6;font-weight:700;font-family:'Liberation Sans', sans-serif;transform:scaleX(0.9175);">FINANCEIRO</div>
<div id="t42" class="t" style="left:207px;top:266.54px;font-size:10px;line-height:10px;color:#f6f6f6;font-weight:700;font-family:'Liberation Sans', sans-serif;transform:scaleX(0.9086);">CONSULTAS</div>
<div id="t43" class="t" style="left:323.7px;top:266.54px;font-size:10px;line-height:10px;color:#3b3b3b;font-weight:700;font-family:'Liberation Sans', sans-serif;transform:scaleX(0.9072);">ESTOQUE</div>
<div id="t44" class="t" style="left:90.5px;top:302.64px;font-size:10px;line-height:10px;color:#404040;font-weight:400;font-family:'Liberation Sans', sans-serif;transform:scaleX(1.0581);">Escolha um material:</div>
<div class="a" style="left:208px;top:291px;width:271px;height:33px;background:#fff;border:1px solid #d4d4d4"></div>
<div class="a" style="left:30px;top:330px;width:972px;height:1px;background:#d9d9d9"></div>
<div id="t45" class="t" style="left:42.8px;top:344.80px;font-size:13px;line-height:13px;color:#404040;font-weight:700;font-family:'Liberation Sans', sans-serif;transform:scaleX(0.9618);">Total de Entradas</div>
<div class="a" style="left:31px;top:365px;width:160px;height:40px;background:#58b140"></div>
<div id="t46" class="t" style="left:104.6px;top:374.18px;font-size:24px;line-height:24px;color:#f4fbf0;font-weight:700;font-family:'Liberation Sans', sans-serif;transform:scaleX(1.0554);">0</div>
<div id="t47" class="t" style="left:42.8px;top:412.00px;font-size:13px;line-height:13px;color:#404040;font-weight:700;font-family:'Liberation Sans', sans-serif;transform:scaleX(0.9385);">Total de Saídas</div>
<div class="a" style="left:31px;top:432px;width:160px;height:40px;background:#f0492e"></div>
<div id="t48" class="t" style="left:104.6px;top:441.28px;font-size:24px;line-height:24px;color:#fdf2ee;font-weight:700;font-family:'Liberation Sans', sans-serif;transform:scaleX(1.0554);">0</div>
<div id="t49" class="t" style="left:42.5px;top:479.00px;font-size:13px;line-height:13px;color:#404040;font-weight:700;font-family:'Liberation Sans', sans-serif;transform:scaleX(0.9331);">Em Estoque</div>
<div class="a" style="left:30px;top:498px;width:162px;height:42px;background:#f2f2f2;border:1px solid #d9d9d9"></div>
<div id="t50" class="t" style="left:104.3px;top:507.98px;font-size:24px;line-height:24px;color:#3a3d44;font-weight:700;font-family:'Liberation Sans', sans-serif;transform:scaleX(1.0854);">0</div>
<div id="t51" class="t" style="left:42.5px;top:546.00px;font-size:13px;line-height:13px;color:#404040;font-weight:700;font-family:'Liberation Sans', sans-serif;transform:scaleX(0.9632);">Estoque Mínimo</div>
<div class="a" style="left:30px;top:565px;width:162px;height:41px;background:#ffc000"></div>
<div id="t52" class="t" style="left:80px;top:575.48px;font-size:24px;line-height:24px;color:#fff6d8;font-weight:700;font-family:'Liberation Sans', sans-serif;transform:scaleX(1.1282);">#N/D</div>
<div id="t53" class="t" style="left:220.3px;top:344.60px;font-size:13px;line-height:13px;color:#404040;font-weight:700;font-family:'Liberation Sans', sans-serif;transform:scaleX(0.9751);">Movimentação do Estoque</div>
<div class="a" style="left:208px;top:364px;width:800px;height:245px;background:#fff;border:1px solid #d9d9d9"></div>
<div class="a" style="left:219px;top:556px;width:783px;height:1px;background:#d9d9d9"></div>
<div id="t54" class="t" style="left:238.6px;top:565.53px;font-size:10px;line-height:10px;color:#595959;font-weight:400;font-family:'Liberation Sans', sans-serif;transform:scaleX(0.9539);">Janeiro</div>
<div id="t55" class="t" style="left:304.4px;top:565.53px;font-size:10px;line-height:10px;color:#595959;font-weight:400;font-family:'Liberation Sans', sans-serif;transform:scaleX(0.9751);">Fevereiro</div>
<div id="t56" class="t" style="left:381.3px;top:565.53px;font-size:10px;line-height:10px;color:#595959;font-weight:400;font-family:'Liberation Sans', sans-serif;transform:scaleX(1.0109);">Março</div>
<div id="t57" class="t" style="left:455px;top:565.53px;font-size:10px;line-height:10px;color:#595959;font-weight:400;font-family:'Liberation Sans', sans-serif;transform:scaleX(1.0442);">Abril</div>
<div id="t58" class="t" style="left:524.7px;top:565.53px;font-size:10px;line-height:10px;color:#595959;font-weight:400;font-family:'Liberation Sans', sans-serif;transform:scaleX(1.0190);">Maio</div>
<div id="t59" class="t" style="left:591px;top:565.53px;font-size:10px;line-height:10px;color:#595959;font-weight:400;font-family:'Liberation Sans', sans-serif;transform:scaleX(1.0642);">Junho</div>
<div id="t60" class="t" style="left:664.4px;top:565.53px;font-size:10px;line-height:10px;color:#595959;font-weight:400;font-family:'Liberation Sans', sans-serif;transform:scaleX(1.0165);">Julho</div>
<div id="t61" class="t" style="left:732px;top:565.53px;font-size:10px;line-height:10px;color:#595959;font-weight:400;font-family:'Liberation Sans', sans-serif;transform:scaleX(0.9634);">Agosto</div>
<div id="t62" class="t" style="left:796px;top:565.53px;font-size:10px;line-height:10px;color:#595959;font-weight:400;font-family:'Liberation Sans', sans-serif;transform:scaleX(0.9779);">Setembro</div>
<div id="t63" class="t" style="left:868.8px;top:565.53px;font-size:10px;line-height:10px;color:#595959;font-weight:400;font-family:'Liberation Sans', sans-serif;transform:scaleX(1.0293);">Outubro</div>
<div id="t64" class="t" style="left:934.8px;top:565.53px;font-size:10px;line-height:10px;color:#595959;font-weight:400;font-family:'Liberation Sans', sans-serif;transform:scaleX(1.0078);">Novembro</div>
<div class="a" style="left:502px;top:589.5px;width:19px;height:5px;background:#5aac44"></div>
<div id="t65" class="t" style="left:522.7px;top:586.53px;font-size:10px;line-height:10px;color:#595959;font-weight:400;font-family:'Liberation Sans', sans-serif;transform:scaleX(0.9518);">Entradas</div>
<div class="a" style="left:573px;top:589.5px;width:19px;height:5px;background:#ee4a2f"></div>
<div id="t66" class="t" style="left:594px;top:586.53px;font-size:10px;line-height:10px;color:#595959;font-weight:400;font-family:'Liberation Sans', sans-serif;transform:scaleX(0.9313);">Saídas</div>
<div class="a" style="left:635px;top:591px;width:19px;height:2px;background:#a5a5a5"></div>
<div id="t67" class="t" style="left:655px;top:586.53px;font-size:10px;line-height:10px;color:#595959;font-weight:400;font-family:'Liberation Sans', sans-serif;transform:scaleX(0.9774);">Saldo</div>
<div class="a" style="left:692px;top:591px;width:19px;height:2px;background:#f0c419"></div>
<div id="t68" class="t" style="left:713px;top:586.53px;font-size:10px;line-height:10px;color:#595959;font-weight:400;font-family:'Liberation Sans', sans-serif;transform:scaleX(0.9963);">Estoque Mínimo</div>
<div class="a" style="left:0px;top:678px;width:1004px;height:31px;background:#e6e6e6;border-top:1px solid #bdbdbd"></div>
<svg class="a" style="left:26px;top:687px;" width="6" height="9" viewBox="0 0 6 9"><path d="M5 1v7.5L0.8 4.75z" fill="#1f4d35"/></svg>
<svg class="a" style="left:55px;top:687px;" width="6" height="9" viewBox="0 0 6 9"><path d="M1 1v7.5l4.2-3.75z" fill="#1f4d35"/></svg>
<svg class="a" style="left:81px;top:693px;" width="11" height="3" viewBox="0 0 11 3"><rect x="0" y="0.5" width="2.4" height="2.4" fill="#1f4d35"/><rect x="4" y="0.5" width="2.4" height="2.4" fill="#1f4d35"/><rect x="8" y="0.5" width="2.4" height="2.4" fill="#1f4d35"/></svg>
<div class="a" style="left:100px;top:682px;width:1px;height:20px;background:#b8b8b8"></div>
<div class="a" style="left:154px;top:682px;width:1px;height:20px;background:#b8b8b8"></div>
<div class="a" style="left:208px;top:682px;width:1px;height:20px;background:#b8b8b8"></div>
<div class="a" style="left:274px;top:682px;width:1px;height:20px;background:#b8b8b8"></div>
<div class="a" style="left:335px;top:682px;width:1px;height:20px;background:#b8b8b8"></div>
<div class="a" style="left:391px;top:682px;width:1px;height:20px;background:#b8b8b8"></div>
<div class="a" style="left:439px;top:682px;width:1px;height:20px;background:#b8b8b8"></div>
<div class="a" style="left:493px;top:682px;width:1px;height:20px;background:#b8b8b8"></div>
<div class="a" style="left:539px;top:682px;width:1px;height:20px;background:#b8b8b8"></div>
<div class="a" style="left:593px;top:682px;width:1px;height:20px;background:#b8b8b8"></div>
<div class="a" style="left:645px;top:682px;width:1px;height:20px;background:#b8b8b8"></div>
<div class="a" style="left:696px;top:682px;width:1px;height:20px;background:#b8b8b8"></div>
<div class="a" style="left:845px;top:682px;width:1px;height:20px;background:#b8b8b8"></div>
<div id="t69" class="t" style="left:112.6px;top:685.00px;font-size:13px;line-height:13px;color:#444;font-weight:400;font-family:'Liberation Sans', sans-serif;transform:scaleX(0.9552);">cCon</div>
<div id="t70" class="t" style="left:166.5px;top:685.00px;font-size:13px;line-height:13px;color:#444;font-weight:400;font-family:'Liberation Sans', sans-serif;transform:scaleX(1.0365);">cMat</div>
<div id="t71" class="t" style="left:220.6px;top:685.00px;font-size:13px;line-height:13px;color:#444;font-weight:400;font-family:'Liberation Sans', sans-serif;transform:scaleX(0.9930);">cComp</div>
<div id="t72" class="t" style="left:286.4px;top:685.00px;font-size:13px;line-height:13px;color:#444;font-weight:400;font-family:'Liberation Sans', sans-serif;transform:scaleX(0.9713);">cDesp</div>
<div id="t73" class="t" style="left:348.6px;top:685.00px;font-size:13px;line-height:13px;color:#444;font-weight:400;font-family:'Liberation Sans', sans-serif;transform:scaleX(0.9844);">Agen</div>
<div id="t74" class="t" style="left:404.4px;top:685.00px;font-size:13px;line-height:13px;color:#444;font-weight:400;font-family:'Liberation Sans', sans-serif;transform:scaleX(0.9558);">rFlu</div>
<div id="t75" class="t" style="left:450.7px;top:685.00px;font-size:13px;line-height:13px;color:#444;font-weight:400;font-family:'Liberation Sans', sans-serif;transform:scaleX(1.0430);">rCon</div>
<div id="t76" class="t" style="left:504px;top:685.00px;font-size:13px;line-height:13px;color:#444;font-weight:400;font-family:'Liberation Sans', sans-serif;">rEst</div>
<div id="t77" class="t" style="left:552.7px;top:685.00px;font-size:13px;line-height:13px;color:#444;font-weight:400;font-family:'Liberation Sans', sans-serif;transform:scaleX(0.9866);">rAna</div>
<div id="t78" class="t" style="left:605.4px;top:685.00px;font-size:13px;line-height:13px;color:#444;font-weight:400;font-family:'Liberation Sans', sans-serif;transform:scaleX(1.0423);">rImp</div>
<div id="t79" class="t" style="left:658.1px;top:685.00px;font-size:13px;line-height:13px;color:#444;font-weight:400;font-family:'Liberation Sans', sans-serif;transform:scaleX(0.9725);">dFin</div>
<div id="t80" class="t" style="left:708.3px;top:685.00px;font-size:13px;line-height:13px;color:#444;font-weight:400;font-family:'Liberation Sans', sans-serif;transform:scaleX(1.0039);">dCon</div>
<div id="t81" class="t" style="left:815.5px;top:685.00px;font-size:13px;line-height:13px;color:#444;font-weight:400;font-family:'Liberation Sans', sans-serif;transform:scaleX(0.9744);">INI</div>
<div class="a" style="left:752px;top:678px;width:51px;height:25px;background:#fff;border-left:1px solid #b8b8b8;border-right:1px solid #b8b8b8;border-bottom:2px solid #217346"></div>
<div id="t82" class="t" style="left:764.2px;top:685.00px;font-size:13px;line-height:13px;color:#217346;font-weight:700;font-family:'Liberation Sans', sans-serif;transform:scaleX(0.9513);">dEst</div>
<svg class="a" style="left:860px;top:693px;" width="11" height="3" viewBox="0 0 11 3"><rect x="0" y="0.5" width="2.4" height="2.4" fill="#1f4d35"/><rect x="4" y="0.5" width="2.4" height="2.4" fill="#1f4d35"/><rect x="8" y="0.5" width="2.4" height="2.4" fill="#1f4d35"/></svg>
<svg class="a" style="left:883px;top:684px;" width="18" height="17" viewBox="0 0 18 17"><circle cx="8.8" cy="8.5" r="7.4" fill="none" stroke="#6b6b6b" stroke-width="1.2"/><path d="M8.8 4.6v7.8M4.9 8.5h7.8" stroke="#5a5a5a" stroke-width="2"/></svg>
<svg class="a" style="left:919px;top:685px;" width="4" height="15" viewBox="0 0 4 15"><circle cx="2" cy="2.5" r="0.95" fill="#a8a8a8"/><circle cx="2" cy="7" r="0.95" fill="#a8a8a8"/><circle cx="2" cy="11.5" r="0.95" fill="#a8a8a8"/></svg>
<div class="a" style="left:937px;top:685px;width:15px;height:15px;background:#fff;border:1px solid #c6c6c6"></div>
<svg class="a" style="left:941px;top:688px;" width="6" height="9" viewBox="0 0 6 9"><path d="M5 0.5v8L0.5 4.5z" fill="#707070"/></svg>
<div class="a" style="left:953px;top:685px;width:17px;height:15px;background:#fff;border:1px solid #b9b9b9"></div>
<div class="a" style="left:970px;top:685px;width:15px;height:15px;background:#dcdcdc"></div>
<div class="a" style="left:985px;top:685px;width:15px;height:15px;background:#fff;border:1px solid #c6c6c6"></div>
<svg class="a" style="left:990px;top:688px;" width="6" height="9" viewBox="0 0 6 9"><path d="M0.5 0.5v8l4.5-4z" fill="#707070"/></svg>
<div class="a" style="left:0px;top:705px;width:1004px;height:4px;background:#f0f0f0;border-top:1px solid #d8d8d8"></div>
<div class="a" style="left:732px;top:706px;width:38px;height:3px;background:#c8c8c8"></div>
</body></html>
